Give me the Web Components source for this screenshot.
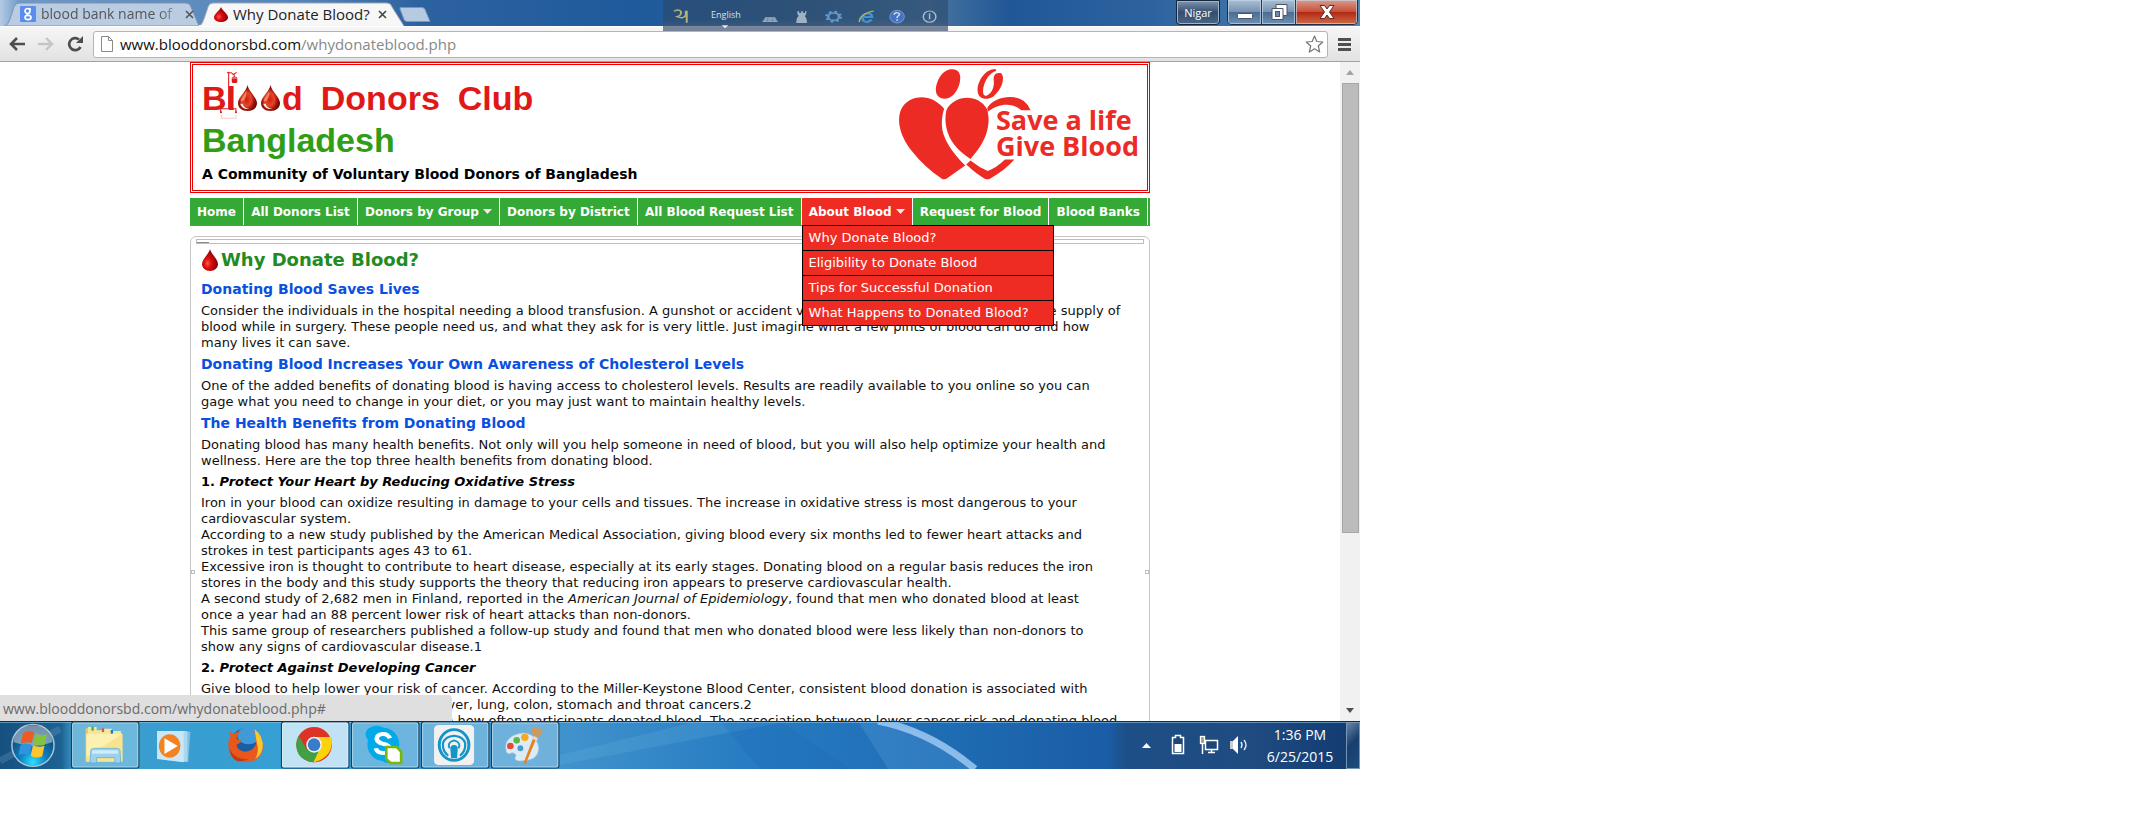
<!DOCTYPE html>
<html lang="en">
<head>
<meta charset="utf-8">
<title>Why Donate Blood?</title>
<style>
body{margin:0;background:#fff;font-family:"DejaVu Sans",sans-serif}
</style>
</head>
<body>
<desk-top>
  <tab-strip slot="chrome"></tab-strip>
  <address-bar slot="chrome"></address-bar>
  <page-view slot="page">
    <site-banner></site-banner>
    <site-nav></site-nav>
    <article-panel heading="Why Donate Blood?">
      <article-section heading="Donating Blood Saves Lives">Consider the individuals in the hospital needing a blood transfusion. A gunshot or accident victim may need a large and immediate supply of<br>blood while in surgery. These people need us, and what they ask for is very little. Just imagine what a few pints of blood can do and how<br>many lives it can save.</article-section>
      <article-section heading="Donating Blood Increases Your Own Awareness of Cholesterol Levels">One of the added benefits of donating blood is having access to cholesterol levels. Results are readily available to you online so you can<br>gage what you need to change in your diet, or you may just want to maintain healthy levels.</article-section>
      <article-section heading="The Health Benefits from Donating Blood">Donating blood has many health benefits. Not only will you help someone in need of blood, but you will also help optimize your health and<br>wellness. Here are the top three health benefits from donating blood.</article-section>
      <article-section number="1." heading="Protect Your Heart by Reducing Oxidative Stress">Iron in your blood can oxidize resulting in damage to your cells and tissues. The increase in oxidative stress is most dangerous to your<br>cardiovascular system.<br>According to a new study published by the American Medical Association, giving blood every six months led to fewer heart attacks and<br>strokes in test participants ages 43 to 61.<br>Excessive iron is thought to contribute to heart disease, especially at its early stages. Donating blood on a regular basis reduces the iron<br>stores in the body and this study supports the theory that reducing iron appears to preserve cardiovascular health.<br>A second study of 2,682 men in Finland, reported in the <em>American Journal of Epidemiology</em>, found that men who donated blood at least<br>once a year had an 88 percent lower risk of heart attacks than non-donors.<br>This same group of researchers published a follow-up study and found that men who donated blood were less likely than non-donors to<br>show any signs of cardiovascular disease.1</article-section>
      <article-section number="2." heading="Protect Against Developing Cancer">Give blood to help lower your risk of cancer. According to the Miller-Keystone Blood Center, consistent blood donation is associated with<br>lower risks for cancers including the liver, lung, colon, stomach and throat cancers.2<br>Risk levels changed in connection with how often participants donated blood. The association between lower cancer risk and donating blood</article-section>
    </article-panel>
  </page-view>
  <task-bar slot="taskbar"></task-bar>
</desk-top>

<script>
const define = (name, html, ready) => {
  const template = document.createElement('template');
  template.innerHTML = html;
  customElements.define(name, class extends HTMLElement {
    constructor() {
      super();
      this.attachShadow({ mode: 'open' }).append(template.content.cloneNode(true));
    }
    connectedCallback() { if (ready) ready(this, this.shadowRoot); }
  });
};

const fillHeading = (host, root) => {
  root.querySelector('.heading').textContent = host.getAttribute('heading') || '';
};

define('desk-top', `
<style>
:host{display:flex;flex-direction:column;position:relative;width:100%;max-width:1360px;height:100vh;max-height:769px;overflow:hidden}
</style>
<slot name="chrome"></slot><slot name="page"></slot><slot name="taskbar"></slot>`);

define('blood-drop', `
<style>:host{display:block;width:16px;height:22px}svg{display:block;width:100%;height:100%}</style>
<svg viewBox="0 0 16 22" preserveAspectRatio="none" aria-hidden="true">
<defs><radialGradient id="g" cx=".35" cy=".65" r=".6"><stop offset="0" stop-color="#ff5a4a"/><stop offset=".35" stop-color="#dd1010"/><stop offset="1" stop-color="#8e0000"/></radialGradient></defs>
<path d="M8 0C9 5 16 10 16 15c0 4-3.500 7-8 7s-8-3-8-7C0 10 7 5 8 0z" fill="url(#g)"/></svg>`);

define('glossy-drop', `
<style>:host{display:block;width:19px;height:26px}svg{display:block;width:100%;height:100%}</style>
<svg viewBox="0 0 54 75" aria-hidden="true" preserveAspectRatio="none">
<defs><radialGradient id="g" cx=".45" cy=".55" r=".62"><stop offset="0" stop-color="#d81a10"/><stop offset=".4" stop-color="#e0482a"/><stop offset=".65" stop-color="#a81208"/><stop offset="1" stop-color="#3c0503"/></radialGradient></defs>
<path d="M27 0C30 18 54 36 54 52c0 14-11 23-27 23S0 66 0 52C0 36 24 18 27 0z" fill="url(#g)"/>
<path d="M23 18C18 30 8 38 8 48l10-4c2-8 8-14 5-26z" fill="#f5a078" opacity=".75"/>
<path d="M6 54c4 12 14 17 26 15-10-2-16-7-19-15z" fill="#fff" opacity=".9"/></svg>`);

define('tab-strip', `
<style>
:host{display:flex;flex:none;height:26px;box-sizing:border-box;padding:2px 2px 0 4px;background:linear-gradient(90deg,#b4cbe4 0,#6f98c6 20px,#5584b8 300px,#2d62a0 420px,#1f5a9c 640px,#31608f 800px,#47759f 930px,#205796 1010px,#2c639f 1150px,#5584b0);font:15px "Open Sans",sans-serif;position:relative}
.tab{position:relative;flex:none;box-sizing:border-box;display:flex;align-items:center;height:24px;width:198px;padding:0 6px 0 16px;border:0;background:none;color:#555;font:inherit;text-align:left}
.tab svg.shape{position:absolute;inset:0;width:100%;height:100%}
.tab > :not(.shape){position:relative}
.tab .label{flex:1;white-space:nowrap;font-size:15px;line-height:22px}
.old .label{font-size:14px;-webkit-mask-image:linear-gradient(90deg,#000 84%,#0005);flex:none;width:138px;margin-right:6px}
.now{margin-left:-4px;padding-right:17px;width:206px;color:#222}
.fav{width:16px;height:16px;margin-right:5px;flex:none}
blood-drop{width:14px;height:15px;margin-right:5px;flex:none}
.x{width:9px;height:9px;flex:none}
.new{flex:none;margin:5px 0 0 -5px;width:32px;height:15px;padding:0;border:0;background:none}
.new svg{display:block}
.ime{position:absolute;left:663px;top:0;width:285px;height:31px;z-index:3;background:#2c486899;display:block}
.ime:before{content:"";position:absolute;inset:0;background:linear-gradient(transparent 60%,#6c708a66)}
.ime svg{position:absolute;inset:0;width:100%;height:100%;opacity:.85}
.ime span{position:absolute;left:48px;top:8px;font-size:9px;line-height:14px;color:#d6e0ee}
.right{display:flex;margin-left:auto;align-self:flex-start;margin-top:-2px}
.user{box-sizing:border-box;width:44px;height:25px;margin-right:7px;padding:0;border:1px solid #14263e;border-radius:0 0 4px 4px;box-shadow:inset 0 0 0 1px #9db4cc;background:linear-gradient(#7d95ad,#334e6e 50%,#4a6787);color:#fff;font:11px "Open Sans",sans-serif}
.win{display:flex;height:25px;box-sizing:border-box;border:1px solid #1b2f4a;border-top:0;border-radius:0 0 5px 5px;overflow:hidden}
.win button{padding:0;border:0;border-right:1px solid #223a57;box-shadow:inset 0 0 0 1px #c5d6e8aa;background:linear-gradient(#a9bfd4,#7893b0 48%,#4a6c92 50%,#6c8fb3);width:34px}
.win .close{width:61px;border:0;background:linear-gradient(#d99a8c,#c9513a 48%,#b02713 50%,#cf6a45)}
.win svg{display:block;margin:auto}
</style>
<button class="tab old"><svg class="shape" viewBox="0 0 198 24" preserveAspectRatio="none"><path d="M0 24C4 24 5 20 10 5q1-4 5-4h167q4 0 5 4l8 19z" fill="#b9cce2" stroke="#7b93b2"/></svg>
<svg class="fav" viewBox="0 0 16 16"><rect width="16" height="16" rx="1" fill="#5b8def"/><g fill="none" stroke="#fff" stroke-width="1.700"><circle cx="7.500" cy="5" r="2.500"/><path d="M9 3h2M8 7.500q-2 1 0 2"/><ellipse cx="8" cy="11.500" rx="3" ry="2.200"/></g></svg>
<span class="label">blood bank name of</span><svg class="x" viewBox="0 0 9 9"><path d="M1 1l7 7M8 1l-7 7" stroke="#555" stroke-width="1.600"/></svg></button>
<button class="tab now"><svg class="shape" viewBox="0 0 206 24" preserveAspectRatio="none"><path d="M0 24C4 24 5 20 10 5q1-4 5-4h174q4 0 5 4l12 19z" fill="#f7f7f7" stroke="#9ba7b6"/><path d="M1 24h204" stroke="#f5f5f5" stroke-width="2"/></svg>
<blood-drop></blood-drop><span class="label">Why Donate Blood?</span><svg class="x" viewBox="0 0 9 9"><path d="M1 1l7 7M8 1l-7 7" stroke="#444" stroke-width="1.600"/></svg></button>
<button class="new" aria-label="New tab"><svg viewBox="0 0 32 15"><path d="M1 .5h22q2 0 3 2l5 12H8q-2 0-3-2L1 2z" fill="#b6cae2" stroke="#7d97b8"/></svg></button>
<div class="ime"><svg viewBox="89 0 588 93" preserveAspectRatio="none" aria-hidden="true">
<g fill="none" stroke="#cfc67a" stroke-width="4"><path d="M112 34q8-8 14 0q2 12-8 16q14 8 18-4V32M138 32v36"/></g>
<path d="M210 76h14l-7 9z" fill="#fff"/>
<path d="M300 52h20l6 14h-32z" fill="#b4c3d3"/><path d="M297 57h27M296 62h29M305 53v12M315 53v12" stroke="#4e6b8a"/>
<path d="M366 34h4v5h4v-5h4v5h4v-5h3q0 12-4 14 5 4 5 21h-22q0-17 5-21-4-4-3-14z" fill="#b4c3d3"/>
<circle cx="441" cy="50" r="11" fill="none" stroke="#6da6dc" stroke-width="5"/><circle cx="441" cy="50" r="15" fill="none" stroke="#6da6dc" stroke-width="5" stroke-dasharray="6 6"/>
<path d="M519 59q-8 12-17 3-5-18 8-22 10 0 10 11h-19" fill="none" stroke="#3aa0e8" stroke-width="6"/><path d="M494 66q0-24 30-33" fill="none" stroke="#e2c24c" stroke-width="3"/>
<ellipse cx="572" cy="50" rx="15" ry="19" fill="#4a78cf" stroke="#8fb0e8" stroke-width="2"/><path d="M566 44q1-7 7-6 7 3 2 9-3 2-3 7M572 58v4" fill="none" stroke="#fff" stroke-width="3"/>
<ellipse cx="639" cy="50" rx="13" ry="17" fill="none" stroke="#c2cedb" stroke-width="3"/><path d="M639 40v18" stroke="#c2cedb" stroke-width="3"/></svg><span>English</span></div>
<div class="right"><button class="user">Nigar</button>
<div class="win"><button aria-label="Minimize"><svg width="18" height="18"><rect x="1.500" y="10.500" width="15" height="5" rx="1" fill="#fff" stroke="#4a5568"/></svg></button>
<button aria-label="Restore"><svg width="18" height="18"><path d="M6 1.500h11v11h-4v4H2v-11h4z" fill="#fff" stroke="#4a5568"/><rect x="5.500" y="8.500" width="4" height="5" fill="#6d8bac" stroke="#4a5568"/><path d="M6 5.500h7v7" fill="none" stroke="#4a5568"/></svg></button>
<button class="close" aria-label="Close"><svg width="18" height="18"><path d="M2 2.500h4.500L9 6l2.500-3.500H16L11.500 9l4.500 6.500h-4.500L9 12l-2.500 3.500H2L6.500 9z" fill="#fff" stroke="#5a2a26"/></svg></button></div></div>`);

define('address-bar', `
<style>
:host{display:flex;flex:none;align-items:center;box-sizing:border-box;height:36px;padding:0 8px;background:linear-gradient(#f6f6f6,#e2e2e3);border-bottom:1px solid #a2a2a4;border-top:1px solid #fff}
button{flex:none;padding:0;border:0;background:none}
svg{display:block}
.back{margin-left:1px}.fwd{margin-left:13px}.reload{margin-left:13px}
form{position:relative;display:flex;align-items:center;flex:1;height:25px;margin:0 10px 0 9px;padding:0 3px 0 7px;border:1px solid #b5b5b7;border-radius:3px;background:#fff}
label{position:relative;display:flex;flex:1;align-items:center;margin-left:7px;height:25px}
input{flex:1;height:25px;padding:0;border:0;outline:0;background:none;color:transparent;font:15px/25px "Open Sans",sans-serif}
.url{position:absolute;left:0;top:0;font:15px/25px "Open Sans",sans-serif;color:#888;pointer-events:none}
.url b{font-weight:400;color:#111}
</style>
<button class="back" aria-label="Back"><svg width="16" height="14"><path d="M8 1L2 7l6 6M2 7h14" fill="none" stroke="#4e4e4e" stroke-width="2.600"/></svg></button>
<button class="fwd" aria-label="Forward"><svg width="16" height="14"><path d="M8 1l6 6-6 6M14 7H0" fill="none" stroke="#c5c5c5" stroke-width="2.400"/></svg></button>
<button class="reload" aria-label="Reload"><svg width="17" height="16"><path d="M13.500 11A6 6 0 1 1 12 3.500" fill="none" stroke="#4e4e4e" stroke-width="2.700"/><path d="M16 0v7H9z" fill="#4e4e4e"/></svg></button>
<form><svg width="12" height="16"><path d="M.5.5h7l4 4v11H.5zM7.500.5v4h4" fill="#fff" stroke="#8a8a8a"/></svg>
<label aria-label="Address"><input type="text" aria-label="Address"><span class="url"><b>www.blooddonorsbd.com</b>/whydonateblood.php</span></label>
<button type="button" aria-label="Bookmark"><svg width="19" height="18" viewBox="0 0 19 18"><path d="M9.500 1l2.300 5.500 6 .5-4.500 4 1.400 6-5.200-3.200L4.300 17l1.400-6L1.200 7l6-.5z" fill="#fff" stroke="#777" stroke-width="1.200" stroke-linejoin="round"/></svg></button></form>
<button aria-label="Menu"><svg width="14" height="13"><path d="M0 1.500h13M0 6.500h13M0 11.500h13" stroke="#4f4f4f" stroke-width="3"/></svg></button>`);

define('page-view', `
<style>
:host{display:flex;flex:1;min-height:0;position:relative;overflow:hidden;background:#fff}
.page{flex:1;min-width:0;overflow:hidden}
.site{width:960px;max-width:100%;margin:0 auto}
.status{position:absolute;left:0;bottom:0;z-index:5;box-sizing:border-box;width:452px;height:26px;padding-left:3px;border-radius:0 4px 0 0;background:#dfdfdf;color:#6a6a6a;font:14px/28px "Open Sans",sans-serif}
</style>
<div class="page"><div class="site"><slot></slot></div></div>
<scroll-rail></scroll-rail>
<div class="status">www.blooddonorsbd.com/whydonateblood.php#</div>`);

define('scroll-rail', `
<style>
:host{display:flex;flex:none;flex-direction:column;align-items:center;box-sizing:border-box;width:20px;padding:8px 1px;background:#f1f1f1}
.thumb{box-sizing:border-box;width:17px;flex:0 0 450px;margin-top:8px;background:#bcbcbc;border:1px solid #a6a6a6}
svg{display:block;flex:none}.down{margin-top:auto}
</style>
<svg width="8" height="5"><path d="M0 5l4-5 4 5z" fill="#a3a3a3"/></svg><div class="thumb"></div><svg class="down" width="8" height="5"><path d="M0 0l4 5 4-5z" fill="#505050"/></svg>`);

define('site-banner', `
<style>
:host{display:flex;justify-content:space-between;box-sizing:border-box;height:131px;padding:0 4px 0 9px;border:3px double #e60000;background:#fff}
h1{margin:12px 0 0;font:bold 34px/42px "Liberation Sans",sans-serif;color:#e01818}
.line{display:flex;gap:18px}
.word{display:flex}
.green{color:#2f9e16}
glossy-drop{margin:8px 2px 0}
.l{position:relative}
.l svg{position:absolute;left:-7px;top:-6px;width:18px;height:50px}
p{margin:3px 0 0;font:bold 14px/20px "DejaVu Sans",sans-serif;color:#000}
.save{position:relative;width:250px;height:117px;margin-top:1px}
.save svg{display:block;width:100%;height:100%}
.save div{position:absolute;left:103px;top:41px;font:bold 27px/26px "Open Sans",sans-serif;color:#ec2b24;white-space:nowrap}
</style>
<div><h1><span class="line"><span class="word">B<span class="l">l<svg viewBox="126 50 52 150" preserveAspectRatio="none" aria-hidden="true"><path d="M151 52v112M146 55h12l6 5 10-6M167 60v8" fill="none" stroke="#e01818" stroke-width="3"/><rect x="160" y="67" width="16" height="19" rx="4" fill="#e01818"/><path d="M161 71h14" stroke="#fff" stroke-width="2"/><path d="M128 175v-12h44v12" fill="none" stroke="#e01818" stroke-width="3"/><circle cx="129" cy="174" r="3" fill="#e01818"/><circle cx="172" cy="174" r="3" fill="#e01818"/><path d="M130 182v10h42v-10" fill="none" stroke="#f8c8c8" stroke-width="3"/></svg></span><glossy-drop></glossy-drop><glossy-drop></glossy-drop>d</span><span>Donors</span><span>Club</span></span>
<span class="green">Bangladesh</span></h1>
<p>A Community of Voluntary Blood Donors of Bangladesh</p></div>
<div class="save"><svg viewBox="300 30 665 350" preserveAspectRatio="none" aria-hidden="true"><g fill="#ec2b24">
<path d="M436 158C405 115 355 113 329 147C306 179 315 235 349 283Q385 335 430 367Q437 371 444 366L492 328Q440 270 431 220Q427 190 436 158z"/>
<path d="M454 40C480 36 484 65 474 93C463 122 445 133 427 126C408 116 412 88 424 64C433 48 444 41 454 40z"/>
<path d="M442 162C462 116 526 110 550 159C566 220 534 275 506 308Q452 270 442 215Q437 188 442 162z"/>
<path fill-rule="evenodd" d="M572 39C546 39 524 75 525 104C526 129 549 134 567 121C590 101 599 65 588 52C574 47 566 57 568 72C570 89 565 111 550 118C539 122 538 107 541 91C546 69 558 50 575 44z"/>
<path d="M551 155C570 121 622 113 648 135Q661 147 666 162H641C620 140 582 139 552 167z"/>
<path d="M506 313L495 325Q521 353 544 367Q551 371 558 367Q596 344 623 310H598Q575 335 552 344Q529 334 506 313z"/></g></svg>
<div>Save a life<br>Give Blood</div></div>`);

define('site-nav', `
<style>
:host{display:block;margin-top:5px;font:bold 12px/28px "DejaVu Sans",sans-serif}
ul{margin:0;padding:0;list-style:none}
.bar{display:flex;background:#35a935;border-bottom:1px solid #7d7d7d;padding-right:2px}
.bar>li{position:relative;flex:1 1 auto;border-right:1px solid #fff;white-space:nowrap}
.bar>li>a{display:flex;align-items:center;justify-content:center;height:27px;color:#fff;text-decoration:none}
.arrow{margin-left:4px;width:9px;height:5px}
.on{background:#ee2c24}
.menu{position:absolute;z-index:4;left:0;top:27px;box-sizing:border-box;width:252px;background:#ee2c24;border:1px solid #000;font:13px/24px "DejaVu Sans",sans-serif}
.menu a{display:block;padding-left:6px;color:#fff;text-decoration:none}
.menu li+li{border-top:1px solid #000}
</style>
<nav><ul class="bar">
<li><a href="#">Home</a></li><li><a href="#">All Donors List</a></li>
<li><a href="#">Donors by Group<svg class="arrow" viewBox="0 0 9 5"><path d="M0 0h9L4.500 5z" fill="#fbe6f0"/></svg></a></li>
<li><a href="#">Donors by District</a></li><li><a href="#">All Blood Request List</a></li>
<li class="on"><a href="#">About Blood<svg class="arrow" viewBox="0 0 9 5"><path d="M0 0h9L4.500 5z" fill="#fbe6f0"/></svg></a>
<ul class="menu"><li><a href="#">Why Donate Blood?</a></li><li><a href="#">Eligibility to Donate Blood</a></li><li><a href="#">Tips for Successful Donation</a></li><li><a href="#">What Happens to Donated Blood?</a></li></ul></li>
<li><a href="#">Request for Blood</a></li><li><a href="#">Blood Banks</a></li></ul></nav>`);

define('article-panel', `
<style>
:host{display:block;position:relative;box-sizing:border-box;margin-top:10px;padding:2px 5px 200px;border:1px solid #c6c6c6;border-radius:6px;background:#fff}
.rule{box-sizing:border-box;height:5px;border:1px solid #bdbdbd;display:flex}
.rule i{width:12px;height:2px;border-bottom:1px solid #8a8a8a}
h2{display:flex;align-items:center;gap:3px;margin:0;height:32px;padding-left:6px;font:bold 18px/30px "DejaVu Sans",sans-serif;color:#228b22}
.body{padding-left:5px}
.grip{position:absolute;top:333px;box-sizing:border-box;width:4px;height:4px;border:1px solid #bdbdbd}
</style>
<div class="rule"><i></i></div>
<h2><blood-drop></blood-drop><span class="heading"></span></h2>
<div class="body"><slot></slot></div>
<span class="grip" style="left:0"></span><span class="grip" style="right:0"></span>`, fillHeading);

define('article-section', `
<style>
:host{display:block}
h3{margin:5px 0;font:bold 14px/17px "DejaVu Sans",sans-serif;color:#0a50e0}
:host([number]) h3{font-size:13px;line-height:16px;color:#000}
:host([number]) .heading{font-style:italic}
.text{font:13px/16px "DejaVu Sans",sans-serif;color:#111;white-space:nowrap}
</style>
<h3><span class="num"></span><span class="heading"></span></h3><div class="text"><slot></slot></div>`, (host, root) => {
  fillHeading(host, root);
  if (host.hasAttribute('number')) root.querySelector('.num').textContent = host.getAttribute('number') + ' ';
});

define('task-bar', `
<style>
:host{display:flex;flex:none;position:relative;height:48px;box-sizing:border-box;background:#2a7cbf;overflow:hidden;z-index:6}
.bg{position:absolute;left:0;top:0;width:1360px;height:48px}
button{position:relative;flex:none;padding:0;border:0;background:none}
button svg{display:block;width:100%;height:48px}
.start{width:70px}
.tasks{display:flex}
.task{width:70px}
.tray{position:relative;display:flex;align-items:center;margin-left:auto;color:#fff}
.tray svg{display:block}
.clock{width:68px;margin:2px 12px 0 16px;text-align:center;font:14px/22px "Open Sans",sans-serif}
.peek{box-sizing:border-box;width:14px;height:47px;border:1px solid #7795b5;background:linear-gradient(135deg,#6885a6,#183e6d 45%,#1d4c80)}
</style>
<svg class="bg" viewBox="0 0 1360 48" aria-hidden="true"><defs>
<linearGradient id="b"><stop offset="0" stop-color="#155080"/><stop offset=".045" stop-color="#1c6292"/><stop offset=".055" stop-color="#3b9dcc"/><stop offset=".2" stop-color="#369fd4"/><stop offset=".42" stop-color="#3f92cc"/><stop offset=".55" stop-color="#277cc2"/><stop offset=".7" stop-color="#1e6cb3"/><stop offset=".815" stop-color="#1b5ca6"/><stop offset=".828" stop-color="#1d4f86"/><stop offset=".92" stop-color="#1f4b80"/><stop offset="1" stop-color="#123b70"/></linearGradient></defs>
<rect width="1360" height="48" fill="url(#b)"/>
<path d="M560 34L690 2h90L560 44z" fill="#6db8e2" opacity=".2"/><path d="M720 0l40 48h90L780 0z" fill="#1a66ae" opacity=".2"/><path d="M858 0l30 48h86Q940 12 880 0z" fill="#5da0dd" opacity=".3"/>
<path d="M878 0Q930 10 975 48" fill="none" stroke="#9cc8f2" stroke-width="7" opacity=".85"/><path d="M0 40L60 8" stroke="#6c9dbb" stroke-width="7" opacity=".3"/>
<path d="M0 .5h1360" stroke="#0e2c4c"/><path d="M0 1.500h1360" stroke="#8cc2e2" opacity=".6"/></svg>
<button class="start" aria-label="Start"><svg viewBox="0 123 189 144" preserveAspectRatio="none"><defs><radialGradient id="o" cx=".5" cy=".9" r=".8"><stop offset="0" stop-color="#2ee0ff"/><stop offset=".4" stop-color="#0d7fc0"/><stop offset="1" stop-color="#123f66"/></radialGradient></defs>
<ellipse cx="89" cy="196" rx="57" ry="63" fill="url(#o)" stroke="#a7c4d6" stroke-width="4"/><path d="M36 186Q42 136 89 136T142 186Q90 208 36 186z" fill="#dbe6ee" opacity=".5"/>
<path d="M62 160q14-10 30-3l-6 32q-15-6-30 2z" fill="#ef5a22"/><path d="M96 160q16 10 31 2l-6 32q-16 6-31-2z" fill="#84c341"/><path d="M55 195q14-8 30-1l-6 32q-14-8-29 0z" fill="#2f93dd"/><path d="M89 196q16 8 31 1l-6 32q-15 8-31-2z" fill="#fdc62e"/></svg></button>
<div class="tasks"></div>
<div class="tray">
<svg width="9" height="6"><path d="M0 6l4.500-5L9 6z" fill="#fff"/></svg>
<svg width="14" height="22" style="margin-left:20px"><path d="M1.500 3.500h3v-2h5v2h3v16h-11z" fill="#1d4674" stroke="#fff" stroke-width="1.500"/><path d="M3.500 10h7v8h-7z" fill="#fff"/></svg>
<svg width="20" height="20" style="margin-left:14px"><path d="M6.500 5.500h12v9h-12zM9 17.500h7M12.500 15v2M3.500 8v11" fill="#1d4674" stroke="#fff" stroke-width="1.500"/><rect x="1.500" y="1.500" width="4" height="7" fill="#999" stroke="#fff" stroke-width="1.300"/></svg>
<svg width="21" height="20" style="margin-left:10px"><path d="M1 6h3v8H1z" fill="#ccc"/><path d="M4 6l5-5v18l-5-5z" fill="#fff"/><path d="M12 7q2 3 0 6M15 5q4 5 0 10" fill="none" stroke="#dfe9f4" stroke-width="1.400"/></svg>
<div class="clock">1:36 PM<br>6/25/2015</div><div class="peek"></div></div>`, (host, root) => {
  // Each icon is drawn on a 189 x 144 cell; frame: 0 none, 1 running, 2 active.
  const apps = [
    ['Explorer', 1, `<path d="M42 22h22l4 8h66v92H42z" fill="#e3c766"/><path d="M48 18h24v10h12l4-5h24l4 7h22v90H48z" fill="#f5e49a"/><path d="M44 38h98v84H44z" fill="#f6e58e"/><path d="M44 38l98 0-98 70z" fill="#fff6bf" opacity=".7"/><path d="M58 17h6v12h-6z" fill="#5aa03a"/><path d="M86 22h6v11h-6z" fill="#d53"/><path d="M110 27h6v11h-6z" fill="#27c"/><path d="M54 126l2-38q1-6 8-6h62q8 0 9 6l2 38h-16v-16H72v16z" fill="#9bd3ee" stroke="#5fa9cf" stroke-width="2"/><path d="M60 88h70v10H60z" fill="#dff3fc" opacity=".8"/>`],
    ['Media Player', 0, `<path d="M62 32h74l-6 92-68-8z" fill="#7fbfe0"/><path d="M58 30h70v92l-70-8z" fill="#a8d7ee"/><path d="M46 30h72v94l-72-10z" fill="#c9e7f6"/><ellipse cx="80" cy="75" rx="29" ry="35" fill="#f58220"/><path d="M66 52l36 23-36 24z" fill="#fff"/>`],
    ['Firefox', 0, `<ellipse cx="97" cy="70" rx="43" ry="48" fill="#1c5ea6"/><ellipse cx="104" cy="44" rx="30" ry="26" fill="#3e9bd8"/><path d="M50 30q10 6 14 8 8-6 20-6-12 10-12 20 2 8 14 6-4 10-14 12 0 20 22 22 22 0 30-22 4-22-8-44 30 22 26 60-6 36-46 38-44-4-46-46-2-24 6-32z" fill="#e8581c"/><path d="M120 24q26 22 22 58-4 22-20 32 12-22 4-50z" fill="#fbc52c"/><path d="M52 80q12 36 52 34-44 24-52-34z" fill="#c73712"/>`],
    ['Chrome', 2, `<ellipse cx="92" cy="71" rx="48" ry="53" fill="#de3226"/><path d="M92 48h47q8 60-48 76z" fill="#fdd20a"/><path d="M50 44l22 40 32 8-14 32q-48-8-46-58z" fill="#41a044"/><ellipse cx="92" cy="71" rx="21" ry="24" fill="#f3f3f3"/><ellipse cx="92" cy="71" rx="17" ry="19" fill="#3a7ccc"/>`],
    ['Skype', 1, `<ellipse cx="72" cy="40" rx="30" ry="26" fill="#00a9ea"/><ellipse cx="104" cy="100" rx="26" ry="26" fill="#00a9ea"/><ellipse cx="90" cy="70" rx="43" ry="50" fill="#00a9ea"/><path d="M108 52q-6-14-20-13-16 2-16 15 2 10 16 14 20 4 20 16 0 12-18 12-18 0-20-14" fill="none" stroke="#fff" stroke-width="12"/><path d="M98 78h28l12 14v34h-28l-12-12z" fill="#fff" stroke="#7ab800" stroke-width="7"/>`],
    ['Hotspot', 1, `<rect x="38" y="12" width="108" height="120" rx="12" fill="#f1f1f1"/><g fill="none" stroke="#1295c9"><ellipse cx="92" cy="72" rx="40" ry="46" stroke-width="8"/><path d="M76 104q-16-14-14-38 6-20 30-22 24 2 30 22 2 24-14 38" stroke-width="6"/><path d="M80 82q-8-18 12-24 20 6 12 24" stroke-width="5"/></g><path d="M84 112l-2-28q0-12 10-12t10 12l-2 28z" fill="#1295c9"/>`],
    ['Paint', 1, `<path d="M44 92q-8-32 18-48 36-18 58 6 24 36-2 62-18 10-40 8-16-2-8-16-2-10-12-8-10 6-14-4z" fill="#dcebf5" stroke="#a5c4d8" stroke-width="2"/><ellipse cx="82" cy="82" rx="8" ry="9" fill="#4b9ccc"/><ellipse cx="55" cy="75" rx="9" ry="10" fill="#e24a3c"/><ellipse cx="72" cy="58" rx="9" ry="10" fill="#5bb948"/><ellipse cx="94" cy="49" rx="10" ry="11" fill="#f9a91e"/><path d="M118 46l8 4-30 80-6-2z" fill="#e58322"/><path d="M112 22q14-8 32 10l-16 20q-16 0-16-30z" fill="#c99a62"/><path d="M118 44l12 8-4 8-11-6z" fill="#d9d9d9"/>`]
  ];
  const frames = ['', 'fill="#bfe3f5" fill-opacity=".38"', 'fill="#dff2fb" fill-opacity=".82"'];
  root.querySelector('.tasks').innerHTML = apps.map(([name, frame, art]) =>
    `<button class="task" aria-label="${name}"><svg viewBox="0 0 189 144" preserveAspectRatio="none">${frame ? `<rect x="4" y="3" width="182" height="138" rx="6" stroke="#123f5c" stroke-width="3" ${frames[frame]}/><rect x="7" y="6" width="176" height="132" rx="4" fill="none" stroke="#fff" stroke-opacity=".6" stroke-width="2"/>` : ''}${art}</svg></button>`).join('');
});
</script>
</body>
</html>
